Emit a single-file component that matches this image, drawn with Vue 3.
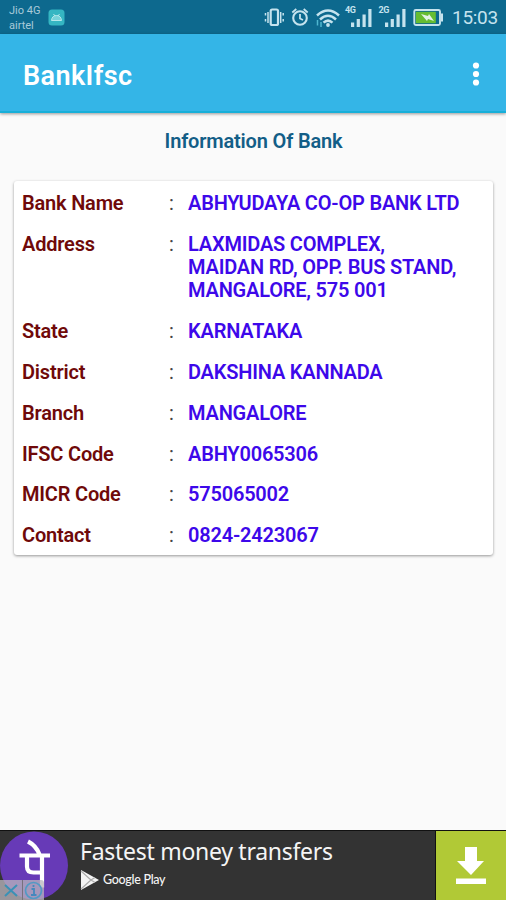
<script setup>
const rows = [
  { label: 'Bank Name', lines: ['ABHYUDAYA CO-OP BANK LTD'] },
  { label: 'Address', lines: ['LAXMIDAS COMPLEX,', 'MAIDAN RD, OPP. BUS STAND,', 'MANGALORE, 575 001'] },
  { label: 'State', lines: ['KARNATAKA'] },
  { label: 'District', lines: ['DAKSHINA KANNADA'] },
  { label: 'Branch', lines: ['MANGALORE'] },
  { label: 'IFSC Code', lines: ['ABHY0065306'] },
  { label: 'MICR Code', lines: ['575065002'] },
  { label: 'Contact', lines: ['0824-2423067'] },
]
</script>

<template>
  <div class="screen">
    <header class="status">
      <div class="carriers"><span>Jio 4G</span><span>airtel</span></div>
      <svg class="app-badge" width="17" height="17" viewBox="0 0 17 17">
        <rect x=".5" y=".5" width="16" height="16" rx="3.5" fill="#35b6c2" />
        <path d="M3.5 11.5Q4 6.5 8.500 6.500T13.500 11.500Z" fill="#79d3da" stroke="#b5e9ec" />
        <path d="M5.500 5l1.500 2M11.500 5L10 7" stroke="#b5e9ec" />
      </svg>
      <svg class="indicators" width="188" height="34" viewBox="0 0 188 34" fill="none" stroke="#c5e3ee">
        <rect x="6.700" y="9.500" width="7.300" height="15.500" rx="1.500" stroke-width="2.200" />
        <path d="M4 12v11M16.700 12v11M1.500 13v2.500M1.500 19v2.500M19.200 13v2.500M19.200 19v2.500" stroke-width="1.500" />
        <circle cx="36" cy="18" r="6.800" stroke-width="2.100" />
        <path d="M36 14v4.500l3 1.500M28.300 12.500l4-3.500M43.700 12.500l-4-3.500" stroke-width="1.800" />
        <path d="M53 15.500Q64 5.500 75 15.500M56 19.500Q64 12 72 19.500M59.500 22.700Q64 18.500 68.500 22.700" stroke-width="2.500" />
        <circle cx="64" cy="25" r="1.900" fill="#c5e3ee" stroke="none" />
        <path d="M53.500 20v5.500M57 27v-5" stroke="#4fb6d0" stroke-width="1.500" />
        <g fill="#c5e3ee" stroke="none">
          <rect x="87" y="22.500" width="3.200" height="4.500" /><rect x="92.700" y="19" width="3.200" height="8" /><rect x="98.500" y="14.500" width="3.200" height="12.500" /><rect x="104.300" y="9" width="3.200" height="18" />
          <rect x="121" y="22.500" width="3.200" height="4.500" /><rect x="126.700" y="19" width="3.200" height="8" /><rect x="132.500" y="14.500" width="3.200" height="12.500" /><rect x="138.300" y="9" width="3.200" height="18" />
          <text x="81" y="13" class="network">4G</text><text x="114.500" y="13" class="network">2G</text>
        </g>
        <rect x="150.300" y="10" width="25.700" height="15" rx="1.500" stroke-width="1.900" />
        <rect x="151.800" y="11.800" width="20" height="11.400" fill="#65bd32" stroke="none" />
        <path d="M178 13.500v8" stroke-width="2" />
        <path d="M157 14l7 2 1-2 5 7-6-2-1 2z" fill="#e2f3e7" stroke="none" />
      </svg>
      <time class="clock">15:03</time>
    </header>
    <div class="toolbar">
      <h1>BankIfsc</h1>
      <svg width="8" height="26" viewBox="0 0 8 26" fill="#fff"><circle cx="4" cy="4.500" r="3.100" /><circle cx="4" cy="13" r="3.100" /><circle cx="4" cy="21.500" r="3.100" /></svg>
    </div>
    <main>
      <h2>Information Of Bank</h2>
      <section class="card">
        <div v-for="row in rows" :key="row.label" class="row">
          <span class="label">{{ row.label }}</span>
          <span class="colon">:</span>
          <div class="value"><div v-for="line in row.lines" :key="line">{{ line }}</div></div>
        </div>
      </section>
    </main>
    <footer class="ad">
      <svg class="logo" width="70" height="69" viewBox="0 0 70 69">
        <circle cx="34" cy="34.500" r="34" fill="#673ab7" />
        <path d="M19.500 24.500h30.500M27 24.500v11q0 6 6.500 6h8M42 24.500v32M28 10.500q8 4 11.500 13" fill="none" stroke="#fff" stroke-width="4.200" />
        <path d="M0 49h41q3 0 3 3v17H0z" fill="#b9b5bd" opacity=".76" />
        <path d="M22.500 49v20" stroke="#77717d" />
        <path d="M5 54l12 11M17 54L5 65" stroke="#3a91b6" stroke-width="2" />
        <circle cx="33.500" cy="59.500" r="8" fill="none" stroke="#5299c4" stroke-width="1.700" />
        <path d="M31.500 58h2.500v6M31 64h5.500M33.500 54v2" fill="none" stroke="#4488bd" stroke-width="1.800" />
      </svg>
      <div class="ad-copy">
        <div class="ad-title">Fastest money transfers</div>
        <div class="store">
          <svg width="20" height="20" viewBox="0 0 20 20"><path d="M1 0l18 10L1 20z" fill="#f4f4f4" /><path d="M1 1l10 9-10 9M11 10l4-2.500M11 10l4 2.500" fill="none" stroke="#aaa" stroke-width="1.200" /></svg>
          <span>Google Play</span>
        </div>
      </div>
      <div class="download">
        <svg width="32" height="39" viewBox="0 0 32 39" fill="#fff"><path d="M10 1h12v14h7L16 29 2 15h8zM1 32.500h30v5.500H1z" /></svg>
      </div>
    </footer>
  </div>
</template>

<style>
body { margin: 0; }
</style>
<style scoped>
* { box-sizing: border-box; }
svg { display: block; flex: none; }
.screen { width: 506px; height: 900px; display: flex; flex-direction: column; overflow: hidden; background: #fafafa; font-family: Roboto, sans-serif; white-space: nowrap; }
.status { height: 34px; flex: none; display: flex; background: #0d698e; color: #c5e3ee; }
.carriers { width: 48px; padding: 3px 0 0 9px; display: flex; flex-direction: column; font-size: 11px; line-height: 15px; color: #a8cad9; }
.app-badge { margin-top: 9px; }
.indicators { margin-left: 199px; }
.network { font: 700 9px Roboto, sans-serif; letter-spacing: -.5px; }
.clock { font-size: 19px; line-height: 36px; letter-spacing: -.3px; }
.toolbar { height: 79px; flex: none; display: flex; align-items: center; justify-content: space-between; padding: 2px 26px 0 23px; background: #34b5e7; border-bottom: 2px solid #17afd9; box-shadow: 0 1px 3px #0006; color: #fff; }
h1 { margin: 4px 0 0; font-size: 27px; line-height: 32px; font-weight: 600; letter-spacing: .4px; }
main { flex: 1; padding: 16px 13px 0 14px; }
h2 { margin: 0; height: 52px; font-size: 20px; line-height: 25px; font-weight: 600; letter-spacing: -.17px; text-align: center; color: #135e87; }
.card { height: 374px; padding: 11px 8px; display: flex; flex-direction: column; gap: 17.500px; background: #fff; border-radius: 3px; box-shadow: 0 1px 3px #0006; }
.row { display: grid; grid-template-columns: 147px 19px 1fr; font-size: 20px; line-height: 23.300px; font-weight: 600; letter-spacing: -.2px; }
.label { color: #6f0909; }
.colon { color: #444; font-weight: 400; }
.value { color: #3d08ea; }
.ad { height: 70px; flex: none; display: flex; background: #333; border-top: 1px solid #111; }
.ad-copy { width: 366px; padding: 4px 0 0 10px; color: #f5f5f5; border-right: 1px solid #111; }
.ad-title { font: 23px/32px "Noto Sans", sans-serif; letter-spacing: -.28px; }
.store { display: flex; align-items: center; gap: 3px; margin-top: 3px; font: 500 12.500px/20px Lato, sans-serif; letter-spacing: -.3px; }
.download { flex: 1; display: flex; justify-content: center; padding-top: 15px; background: #b1c936; }
</style>
